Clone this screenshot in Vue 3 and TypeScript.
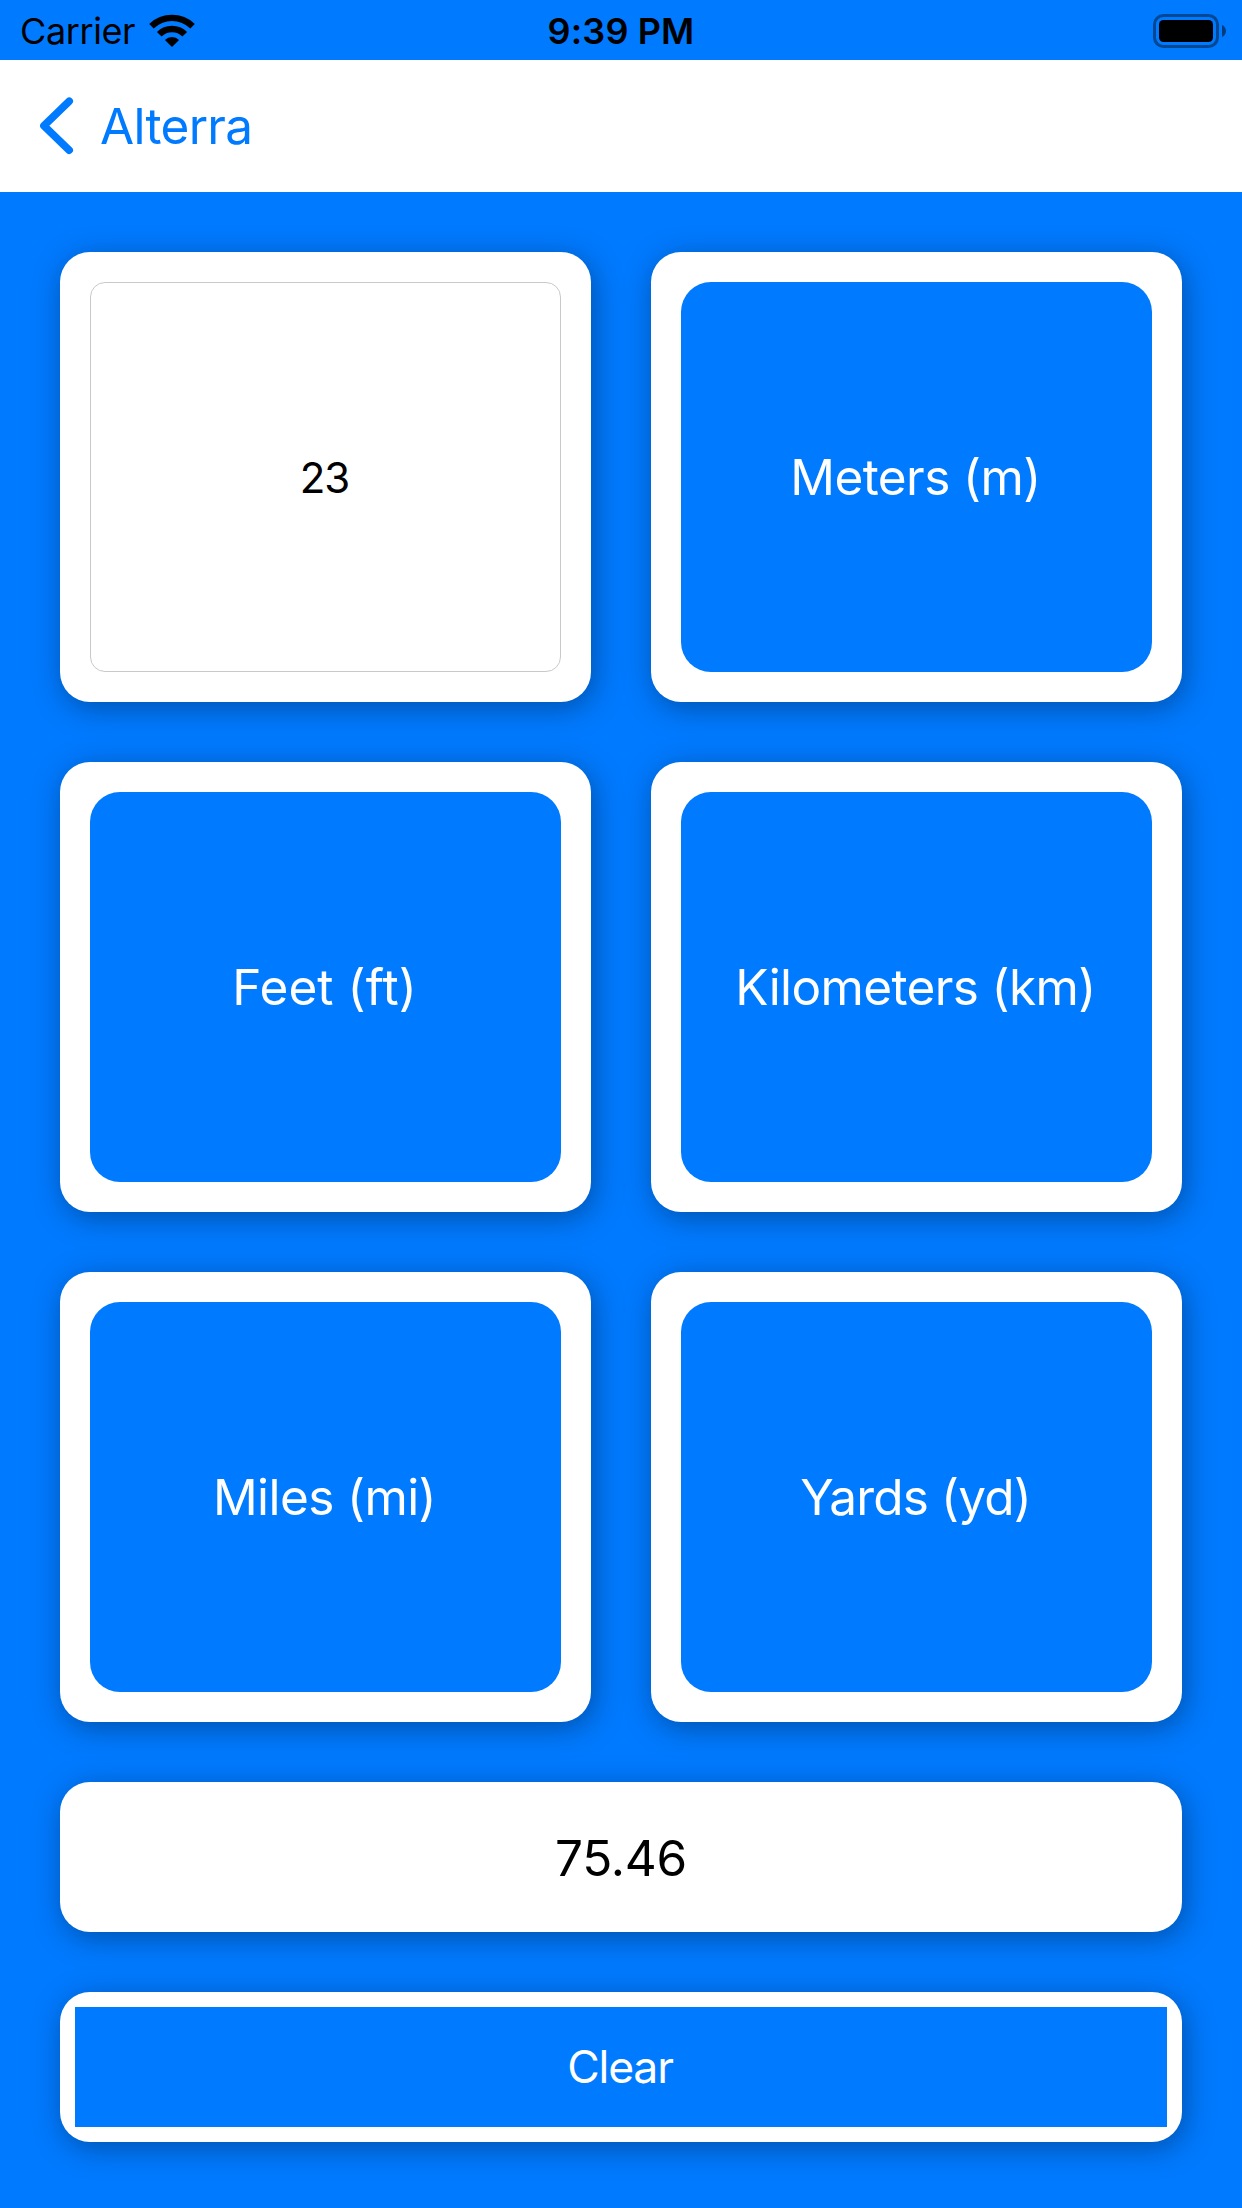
<script setup lang="ts">
import { ref } from 'vue'

interface Unit {
  label: string
  spacing: number
}

const amount = ref('23')
const result = ref('75.46')

const units: Unit[] = [
  { label: 'Meters (m)', spacing: -0.58 },
  { label: 'Feet (ft)', spacing: 0.07 },
  { label: 'Kilometers (km)', spacing: -0.62 },
  { label: 'Miles (mi)', spacing: -0.61 },
  { label: 'Yards (yd)', spacing: -0.86 },
]
</script>

<template>
  <div class="screen">
    <header class="status">
      <div class="status-left">
        <span class="carrier">Carrier</span>
        <svg class="wifi" width="46" height="34" viewBox="149 13 46 34">
          <path d="M172 46 L164.9 38.9 A10.1 10.1 0 0 1 179.1 38.9 Z" />
          <path d="M156.9 30.9 A21.4 21.4 0 0 1 187.1 30.9 L182.4 35.6 A14.7 14.7 0 0 0 161.6 35.6 Z" />
          <path d="M149.2 22.9 A32.9 32.9 0 0 1 194.8 22.9 L190.3 27.5 A26.2 26.2 0 0 0 153.7 27.5 Z" />
        </svg>
      </div>
      <span class="time">9:39 PM</span>
      <div class="status-right">
        <svg width="73" height="34" viewBox="0 0 73 34">
          <rect x="1.5" y="1.5" width="63" height="31" rx="9" fill="none" stroke="#000" stroke-opacity="0.42" stroke-width="3" />
          <rect x="6" y="6" width="54" height="22" rx="4.5" />
          <path d="M69 11 C74.3 13 74.3 21 69 23 Z" fill-opacity="0.5" />
        </svg>
      </div>
    </header>

    <nav class="nav">
      <svg width="34" height="58" viewBox="40 97 34 58">
        <path d="M69.2 101.2 L43.9 125.8 L69.2 150.2" fill="none" stroke="#007aff" stroke-width="7.6" stroke-linecap="round" stroke-linejoin="round" />
      </svg>
      <span class="back">Alterra</span>
    </nav>

    <main class="content">
      <div class="grid">
        <section class="card tile">
          <div class="field">{{ amount }}</div>
        </section>
        <section v-for="u in units" :key="u.label" class="card tile">
          <div class="unit" :style="{ letterSpacing: u.spacing + 'px' }">{{ u.label }}</div>
        </section>
      </div>
      <section class="card result">{{ result }}</section>
      <section class="card clear">
        <div class="clear-button">Clear</div>
      </section>
    </main>
  </div>
</template>

<style>
body {
  background: #007aff;
}
</style>

<style scoped>
.screen {
  width: 1242px;
  height: 2208px;
  overflow: hidden;
  display: flex;
  flex-direction: column;
  background: #007aff;
  font-family: Inter, "Liberation Sans", sans-serif;
  font-size: 49.5px;
  color: #000;
  white-space: nowrap;
}

.screen * {
  box-sizing: border-box;
}

svg {
  display: block;
  flex: none;
}

.status {
  height: 60px;
  flex: none;
  display: grid;
  grid-template-columns: 1fr auto 1fr;
  align-items: center;
  padding: 0 16px 0 20px;
  font-size: 36px;
  line-height: 60px;
}

.status-left {
  display: flex;
  align-items: center;
}

.carrier {
  width: 129px;
  padding-top: 1px;
  letter-spacing: -0.4px;
}

.time {
  padding: 1px 4px 0 0;
  font-weight: 600;
  letter-spacing: 0.13px;
}

.status-right {
  display: flex;
  justify-content: flex-end;
}

.nav {
  height: 132px;
  flex: none;
  display: flex;
  align-items: center;
  gap: 26px;
  padding-left: 40px;
  background: #fff;
  color: #007aff;
}

.back {
  letter-spacing: -0.7px;
}

.content {
  display: flex;
  flex-direction: column;
  gap: 60px;
  padding: 60px;
}

.grid {
  display: grid;
  grid-template-columns: 1fr 1fr;
  grid-auto-rows: 450px;
  gap: 60px;
}

.card {
  display: flex;
  background: #fff;
  border-radius: 30px;
  box-shadow: 3px 6px 30px rgba(0, 0, 0, 0.34);
}

.tile {
  padding: 30px;
}

.field,
.unit,
.clear-button,
.result {
  display: flex;
  align-items: center;
  justify-content: center;
}

.field,
.unit,
.clear-button {
  flex: 1;
}

.field {
  padding-right: 2px;
  border: 1px solid #c9c9c9;
  border-radius: 15px;
  font-size: 42px;
  letter-spacing: -1.1px;
}

.unit {
  padding-right: 2px;
  border-radius: 30px;
  background: #007aff;
  color: #fff;
}

.result {
  height: 150px;
  padding-top: 1px;
  letter-spacing: -0.26px;
}

.clear {
  height: 150px;
  padding: 15px;
}

.clear-button {
  padding-right: 2px;
  background: #007aff;
  color: #fff;
  font-size: 44.5px;
  letter-spacing: -1.16px;
}
</style>
